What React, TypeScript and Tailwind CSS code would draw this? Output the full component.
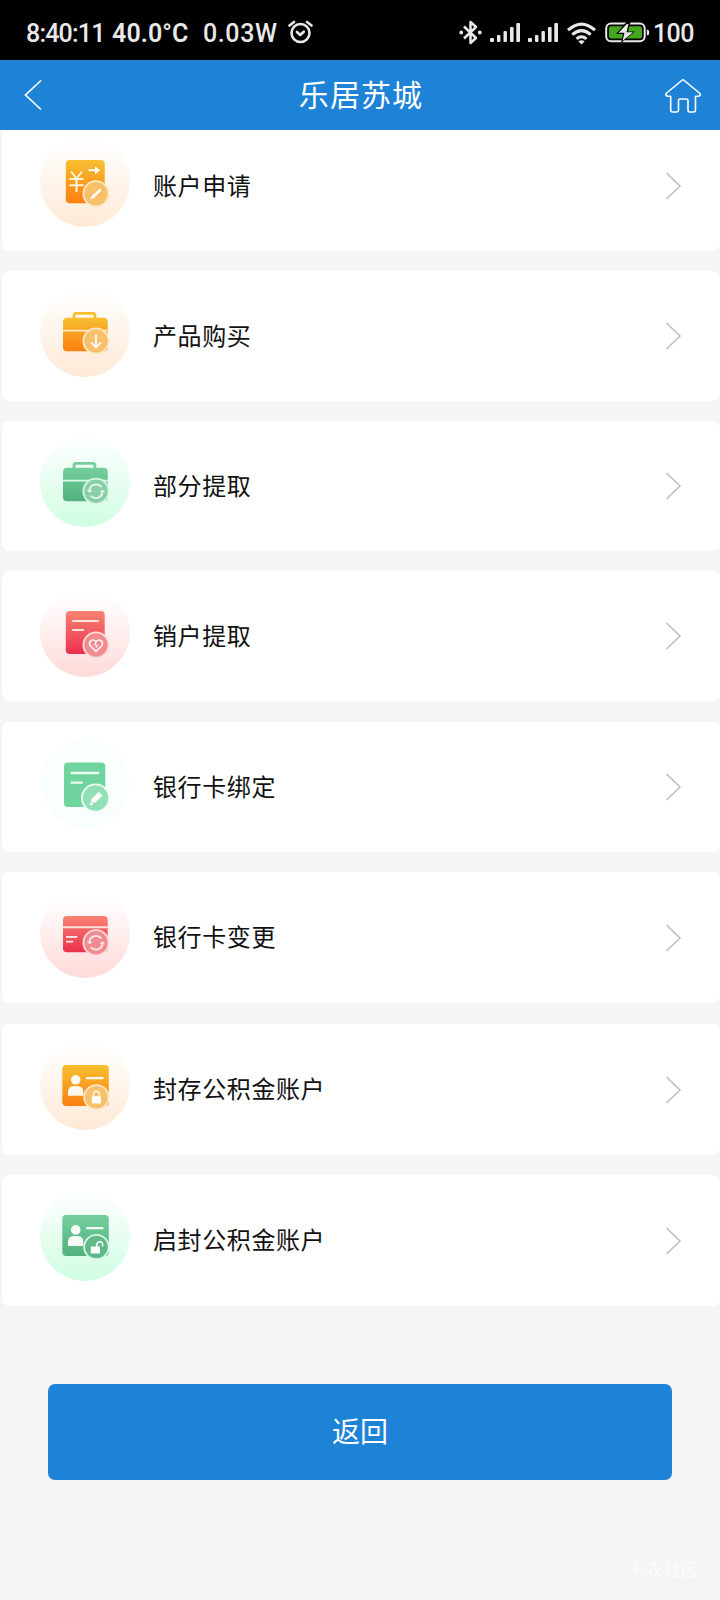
import type { ReactNode } from 'react';

type Tone = 'orange' | 'green' | 'mint' | 'red';

interface ToneColors {
  halo: string;
  haloTop: string;
  top: string;
  bottom: string;
  badge: string;
  ring: string;
}

interface MenuItem {
  label: string;
  tone: Tone;
  icon: ReactNode;
  className: string;
}

const TONES: Record<Tone, ToneColors> = {
  orange: { haloTop: '#fffefc', halo: '#ffe9d6', top: '#f7bf30', bottom: '#fc7f10', badge: '#f8c06a', ring: '#ffe9c8' },
  green: { haloTop: '#fafffc', halo: '#d0fde3', top: '#74cf9b', bottom: '#52b17e', badge: '#88cfa7', ring: '#d9f7e5' },
  mint: { haloTop: '#fafffc', halo: '#f7fefb', top: '#6fd49d', bottom: '#6fd49d', badge: '#93dfb5', ring: '#effcf5' },
  red: { haloTop: '#ffffff', halo: '#ffdad9', top: '#f98472', bottom: '#ea304e', badge: '#f08c90', ring: '#ffdcdb' },
};

function Badge({ tone, cx = 56, cy, r = 12, fill, children }: { tone: Tone; cx?: number; cy: number; r?: number; fill?: string; children: ReactNode }) {
  const c = TONES[tone];
  return (
    <g transform={`translate(${cx} ${cy})`}>
      <circle r={r + 0.6} fill={fill || c.badge} stroke={c.ring} strokeWidth="1.8" />
      {children}
    </g>
  );
}

function RefreshMark() {
  return (
    <g fill="none" stroke="#fff" strokeOpacity=".8" strokeWidth="1.8" strokeLinecap="round">
      <path d="M-6.6 -1.8A6.8 6.8 0 0 1 4.8 -4.8M6.6 1.8A6.8 6.8 0 0 1 -4.8 4.8" />
      <path d="M-8.5 -.8L-6.2 1L-4.4 -1M8.5 .8L6.2 -1L4.4 1" fill="#fff" strokeWidth="1" />
    </g>
  );
}

function Briefcase({ tone, fill }: { tone: Tone; fill: string }) {
  return (
    <>
      <path d="M34 32V28.5Q34 26.4 36 26.4H53Q54.9 26.4 54.9 28.500V32" fill="none" stroke={TONES[tone].top} strokeWidth="2.8" />
      <rect x="23" y="30.7" width="44.7" height="33.600" rx="4" fill={fill} />
      <path d="M23 43.600H67.700" stroke={TONES[tone].ring} strokeWidth="1.900" />
    </>
  );
}

function Person({ dy = 0 }: { dy?: number }) {
  return (
    <g transform={`translate(0 ${dy})`} fill="#fff" fillOpacity=".93">
      <circle cx="35.7" cy="39.8" r="4.8" />
      <path d="M28 55.800V52Q28 46 34 46H37.500Q43.300 46 43.300 52V55.800Z" />
      <rect x="46" y="37" width="17.5" height="2.2" rx=".6" />
    </g>
  );
}

const ITEMS: MenuItem[] = [
  {
    label: '账户申请',
    tone: 'orange',
    className: 'h-[130px]',
    icon: (
      <>
        <rect x="25.8" y="23" width="38.9" height="43.3" rx="4" fill="url(#fill-orange)" />
        <path d="M31 34.500L36.500 41.500L42 34.500M36.500 41.500V55M29.500 42H43.500M29.500 48.200H43.500" fill="none" stroke="#fff3da" strokeWidth="2" />
        <path d="M48.500 33.200H57" stroke="#fff" strokeWidth="2" />
        <path d="M55 29.200L60.200 33.200L55 37.200Z" fill="#fff" />
        <Badge tone="orange" cy={56.8}>
          <path d="M-5.800 5.800L-4.800 3L3.700 -5.300L5.700 -3.600L-3 5Z" fill="#fff" />
        </Badge>
      </>
    ),
  },
  {
    label: '产品购买',
    tone: 'orange',
    className: 'mt-5 h-[130px]',
    icon: (
      <>
        <Briefcase tone="orange" fill="url(#fill-orange)" />
        <Badge tone="orange" cy={54}>
          <path d="M0 -6.500V6M-5 1.500L0 6.500L5 1.500" fill="none" stroke="#fff" strokeOpacity=".9" strokeWidth="1.9" />
        </Badge>
      </>
    ),
  },
  {
    label: '部分提取',
    tone: 'green',
    className: 'mt-5 h-[130px]',
    icon: (
      <>
        <Briefcase tone="green" fill="url(#fill-green)" />
        <Badge tone="green" cy={54.3}>
          <RefreshMark />
        </Badge>
      </>
    ),
  },
  {
    label: '销户提取',
    tone: 'red',
    className: 'mt-5 h-[130px]',
    icon: (
      <>
        <rect x="25.8" y="24" width="38.9" height="43" rx="4" fill="url(#fill-red)" />
        <path d="M32.300 34H59M32.300 43.100H44" stroke="#ffe3e0" strokeWidth="2" />
        <Badge tone="red" cy={58}>
          <path d="M0 6.500L-5.700 .8Q-7.400 -1.600 -5.500 -4Q-2.600 -6.300 0 -3.200Q2.600 -6.300 5.500 -4Q7.400 -1.600 5.700 .8Z" fill="none" stroke="#fff" strokeOpacity=".9" strokeWidth="1.6" strokeLinejoin="round" />
          <path d="M.2 -3L-1.600 -.2L1.400 .4L0 3" fill="none" stroke="#fff" strokeOpacity=".85" strokeWidth="1.2" />
        </Badge>
      </>
    ),
  },
  {
    label: '银行卡绑定',
    tone: 'mint',
    className: 'mt-[21px] h-[130px]',
    icon: (
      <>
        <rect x="24" y="24.4" width="41.3" height="44.6" rx="4" fill="#6fd49d" />
        <path d="M30.700 35H59.300M30.700 44.600H42.800" stroke="#eafbf2" strokeWidth="2.4" />
        <Badge tone="mint" cx={55.5} cy={60} r={13}>
          <path d="M-4.400 1.400L3 -6L7 -2.600L-.4 4.800L-4 4.600Z" fill="#fff" />
          <circle cx="-4.300" cy="6" r="1.600" fill="#fff" />
        </Badge>
      </>
    ),
  },
  {
    label: '银行卡变更',
    tone: 'red',
    className: 'mt-5 h-[131px]',
    icon: (
      <>
        <rect x="23" y="28" width="44.7" height="36.2" rx="4" fill="url(#fill-red)" />
        <path d="M23 39.200H67.700" stroke="#ffe3e0" strokeWidth="2" />
        <path d="M26 49H37.300M26 53.600H33" stroke="#ffe3e0" strokeWidth="1.8" />
        <Badge tone="red" cy={54.8}>
          <RefreshMark />
        </Badge>
      </>
    ),
  },
  {
    label: '封存公积金账户',
    tone: 'orange',
    className: 'mt-[21px] h-[131px]',
    icon: (
      <>
        <rect x="22.3" y="25" width="46.5" height="41" rx="4" fill="url(#fill-orange)" />
        <Person />
        <Badge tone="orange" cx={56.4} cy={57.3} r={11.6}>
          <path d="M-3 -.5V-3Q-3 -6 0 -6Q3 -6 3 -3V-.5" fill="none" stroke="#fff" strokeOpacity=".8" strokeWidth="1.4" />
          <rect x="-4.600" y="-1" width="9.200" height="7.200" rx="1" fill="#fff" />
        </Badge>
      </>
    ),
  },
  {
    label: '启封公积金账户',
    tone: 'green',
    className: 'mt-5 h-[131px]',
    icon: (
      <>
        <rect x="22.3" y="24" width="46.5" height="41" rx="4" fill="url(#fill-green)" />
        <Person dy={-0.9} />
        <Badge tone="green" cx={56.4} cy={56} r={11.6} fill="#5fb989">
          <path d="M.5 0V-2.600Q.8 -5.300 3.600 -5.200Q6.400 -5 6.200 -2.200V-.6" fill="none" stroke="#fff" strokeWidth="1.5" />
          <rect x="-5.600" y="-.4" width="9.200" height="6.800" rx="1" fill="#fff" />
        </Badge>
      </>
    ),
  },
];

function Gradients() {
  return (
    <svg width="0" height="0" className="absolute" aria-hidden="true">
      <defs>
        {Object.entries(TONES).map(([name, c]) => (
          <linearGradient key={`fill-${name}`} id={`fill-${name}`} x1="0" y1="0" x2="0" y2="1">
            <stop offset="0" stopColor={c.top} />
            <stop offset="1" stopColor={c.bottom} />
          </linearGradient>
        ))}
        {Object.entries(TONES).map(([name, c]) => (
          <linearGradient key={`halo-${name}`} id={`halo-${name}`} x1="0" y1="0" x2="0" y2="1">
            <stop offset=".1" stopColor={c.haloTop} />
            <stop offset="1" stopColor={c.halo} />
          </linearGradient>
        ))}
      </defs>
    </svg>
  );
}

function Signal() {
  return (
    <svg width="30" height="20" viewBox="0 0 30 20" fill="#e9e9e9">
      <rect x="0" y="15" width="4" height="4" rx="1" />
      <rect x="7" y="12" width="3.4" height="7" rx="1" />
      <rect x="13.5" y="8" width="3.4" height="11" rx="1" />
      <rect x="20" y="4" width="3.6" height="15" rx="1" />
      <rect x="26.3" y="0" width="3.7" height="19" rx="1" />
    </svg>
  );
}

function StatusBar() {
  return (
    <div className="flex h-[60px] items-center bg-black pt-[6px] pl-[26px] font-['Roboto','Noto_Sans',sans-serif] text-[25px] leading-none font-medium text-[#e9e9e9]">
      <span className="w-[86px] tracking-[-0.8px] whitespace-nowrap">8:40:11</span>
      <span className="w-[91px] font-semibold tracking-[0.1px] whitespace-nowrap">40.0°C</span>
      <span className="w-[84px] tracking-[0.6px] whitespace-nowrap">0.03W</span>
      <svg width="26" height="24" viewBox="0 0 26 24" className="mb-[2px]" fill="none" stroke="#e9e9e9" strokeWidth="2.6" strokeLinecap="round" strokeLinejoin="round">
        <circle cx="13.5" cy="13" r="9" />
        <path d="M10 12L13.200 15L16.800 11.700" />
        <path d="M2.500 5.500L7 2M20 2L24.500 5.500" />
      </svg>
      <div className="ml-auto flex items-center">
        <svg className="mb-[2px]" width="23" height="25" viewBox="0 0 23 25" fill="none" stroke="#e9e9e9" strokeWidth="2.5" strokeLinejoin="round">
          <path d="M5 6.500L17 18L11.500 23V2L17 7L5 18.500" />
          <circle cx="2.2" cy="12.5" r="1.1" fill="#e9e9e9" strokeWidth="1.6" />
          <circle cx="20.8" cy="12.5" r="1.1" fill="#e9e9e9" strokeWidth="1.6" />
        </svg>
        <span className="ml-2">
          <Signal />
        </span>
        <span className="ml-2">
          <Signal />
        </span>
        <svg className="ml-2" width="31" height="23" viewBox="0 0 31 23" fill="none" stroke="#e9e9e9" strokeWidth="3">
          <path d="M2 8.200Q15.500 -4 29 8.200M6.300 12.600Q15.500 4.700 24.700 12.600M10.500 16.800Q15.500 12.700 20.500 16.800" />
          <path d="M12.300 19.300Q15.500 17 18.700 19.300L15.500 22.500Z" fill="#e9e9e9" stroke="none" />
        </svg>
        <svg className="mb-[2px] ml-2" width="45" height="21" viewBox="0 0 45 21">
          <rect x="1.2" y="1.6" width="38.5" height="17.6" rx="4.8" fill="none" stroke="#e9e9e9" strokeWidth="2" />
          <rect x="4" y="4.3" width="33" height="12.2" rx="2.2" fill="#43a81c" />
          <path d="M21.500 0L11 12H18L16 21L30 9.500H23L25.500 0Z" fill="#000" />
          <path d="M21.800 2L13.500 10.800H19.500L17.500 19L28 10.200H21.500L23.500 2Z" fill="#e9e9e9" />
          <path d="M41.800 7.500Q44.200 7.500 44.200 10.400Q44.200 13.300 41.800 13.300Z" fill="#e9e9e9" />
        </svg>
        <span className="ml-[3px] w-[67px] tracking-[-0.6px]">100</span>
      </div>
    </div>
  );
}

function Row({ item }: { item: MenuItem }) {
  return (
    <li className={`flex shrink-0 items-start rounded-[7px] bg-white pr-[38px] pl-[38px] ${item.className}`}>
      <svg className="mt-4 shrink-0" width="90" height="90" viewBox="0 0 90 90">
        <circle cx="45" cy="45" r="45" fill={`url(#halo-${item.tone})`} />
        {item.icon}
      </svg>
      <span className="mb-[3px] ml-[23px] self-center text-[24px] leading-none tracking-[0.6px] text-[#111]">{item.label}</span>
      <svg className="ml-auto self-center" width="17" height="28" viewBox="0 0 17 28" fill="none" stroke="#bdbdbd" strokeWidth="1.5">
        <path d="M1.500 1L15 14L1.500 27" />
      </svg>
    </li>
  );
}

export default function App() {
  return (
    <div className="flex h-[1600px] w-[720px] flex-col overflow-hidden bg-[#f5f5f5] font-['Noto_Sans_CJK_SC',sans-serif]">
      <Gradients />
      <StatusBar />
      <header className="flex h-[70px] shrink-0 items-center justify-between bg-[#1e82d7] pr-[18px] pl-6 text-white">
        <svg width="34" height="32" viewBox="0 0 34 32" fill="none" stroke="currentColor" strokeWidth="1.7">
          <path d="M17 1.500L1.500 16L17 30.500" />
        </svg>
        <h1 className="mb-[5px] text-[30px] leading-none tracking-[1.1px]">乐居苏城</h1>
        <svg className="mt-[2px]" width="38" height="36" viewBox="0 0 38 36" fill="none" stroke="currentColor" strokeWidth="1.6" strokeLinejoin="round">
          <path d="M19 1.500L36 15.500Q37 18 34.500 18.200H31.500V32Q31.500 34 29.500 34H25.500Q24 34 24 32V22.500Q24 21 22.500 21H16Q14.500 21 14.500 22.500V32Q14.500 34 12.500 34H8.500Q6.700 34 6.700 32V18.200H4Q1.200 18 2 15.500Z" />
        </svg>
      </header>
      <main className="flex-1 overflow-hidden">
        <ul className="-mt-[9px] flex flex-col pl-[2px]">
          {ITEMS.map((item) => (
            <Row key={item.label} item={item} />
          ))}
        </ul>
        <div className="px-12 pt-[78px]">
          <button className="h-[96px] w-full rounded-[7px] bg-[#1e82d7] pb-[4px] text-[28px] leading-none text-white">返回</button>
        </div>
        <p className="mt-[80px] pr-[22px] text-right text-[17.5px] leading-none text-white/70">卡农社区</p>
      </main>
    </div>
  );
}
